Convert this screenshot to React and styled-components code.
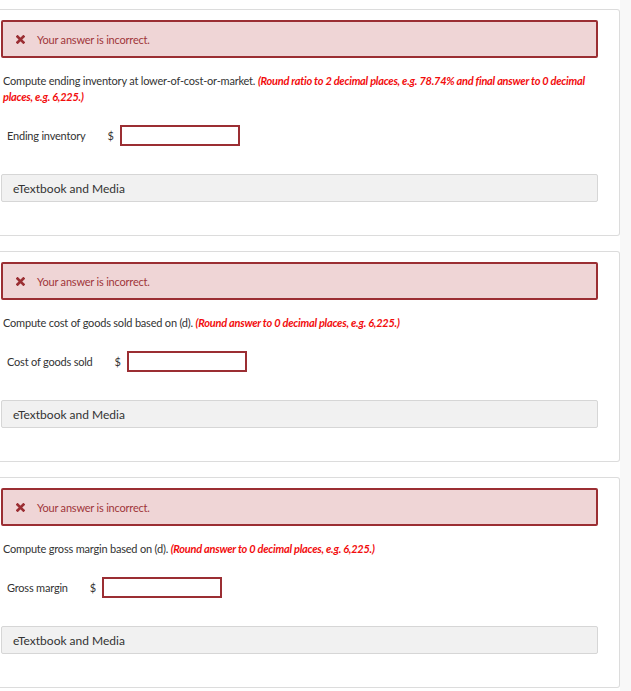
import React from "react";
import styled, { createGlobalStyle } from "styled-components";

const Global = createGlobalStyle`
  html, body { margin: 0; padding: 0; background: #fff; }
  body { font-family: Lato, "Open Sans", Arial, sans-serif; color: #333; }
`;

const Page = styled.div`
  display: flex;
  width: 631px;
  min-height: 691px;
`;

const Main = styled.div`
  width: 620px;
  padding-top: 9px;
  display: flex;
  flex-direction: column;
  gap: 15px;
`;

const Strip = styled.div`
  flex: 1;
  background: #f8f8f8;
`;

const Panel = styled.section`
  border: 1px solid #dcdcdc;
  border-left: none;
  border-radius: 0 3px 3px 0;
  padding: 10px 21px 33px 1px;
  display: flex;
  flex-direction: column;
`;

const Alert = styled.div`
  height: 38px;
  box-sizing: border-box;
  border: 2px solid #9b2e33;
  border-radius: 2px;
  background: #efd5d6;
  display: flex;
  align-items: center;
  padding-left: 13px;
  gap: 12px;
  font-size: 11px;
  letter-spacing: -0.2px;
  color: #a0353a;
`;

const XIcon = styled.svg`
  width: 9px;
  height: 9px;
  flex: none;
`;

const Question = styled.p`
  margin: 15px 0 0 2px;
  font-size: 11px;
  letter-spacing: -0.2px;
  line-height: 16px;
  color: #333;
`;

const Hint = styled.em`
  color: #f20d0d;
  font-weight: 700;
  font-style: italic;
  letter-spacing: -0.25px;
`;

const Row = styled.div`
  display: flex;
  align-items: center;
  margin: 20px 0 0 6px;
  font-size: 11px;
  letter-spacing: -0.2px;
  color: #333;
`;

const Label = styled.span`
  margin-right: 22px;
`;

const Dollar = styled.span`
  margin-right: 6px;
`;

const Input = styled.div`
  width: 120px;
  height: 21px;
  box-sizing: border-box;
  border: 2px solid #9b2e33;
  background: #fff;
`;

const Media = styled.div`
  margin-top: 28px;
  height: 28px;
  box-sizing: border-box;
  border: 1px solid #d6d6d6;
  border-radius: 2px;
  background: #f1f1f1;
  display: flex;
  align-items: center;
  padding-left: 11px;
  font-size: 12px;
  color: #333;
`;

const X = () => (
  <XIcon viewBox="0 0 10 10">
    <path d="M1.8 1.8 L8.2 8.2 M8.2 1.8 L1.8 8.2" stroke="#9b2e33" strokeWidth="3" strokeLinecap="square" />
  </XIcon>
);

const items = [
  {
    q: "Compute ending inventory at lower-of-cost-or-market.",
    hint: "(Round ratio to 2 decimal places, e.g. 78.74% and final answer to 0 decimal places, e.g. 6,225.)",
    label: "Ending inventory",
  },
  {
    q: "Compute cost of goods sold based on (d).",
    hint: "(Round answer to 0 decimal places, e.g. 6,225.)",
    label: "Cost of goods sold",
  },
  {
    q: "Compute gross margin based on (d).",
    hint: "(Round answer to 0 decimal places, e.g. 6,225.)",
    label: "Gross margin",
  },
];

export default function App() {
  return (
    <>
      <Global />
      <Page>
        <Main>
          {items.map((it) => (
            <Panel key={it.label}>
              <Alert>
                <X />
                <span>Your answer is incorrect.</span>
              </Alert>
              <Question>
                {it.q} <Hint>{it.hint}</Hint>
              </Question>
              <Row>
                <Label>{it.label}</Label>
                <Dollar>$</Dollar>
                <Input />
              </Row>
              <Media>eTextbook and Media</Media>
            </Panel>
          ))}
        </Main>
        <Strip />
      </Page>
    </>
  );
}
